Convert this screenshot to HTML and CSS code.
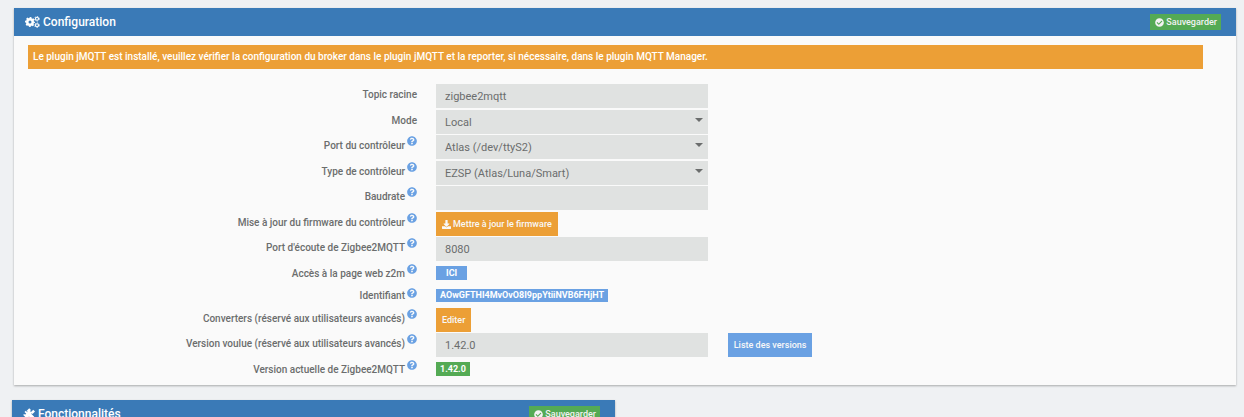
FILE: index.html
```html
<!DOCTYPE html>
<html lang="fr">
<head>
    <meta charset="UTF-8">
    <meta name="viewport" content="width=device-width, initial-scale=1.0">
    <title>Configuration</title>
    <link rel="stylesheet" href="styles.css">
</head>
<body>
    <svg class="sprite" aria-hidden="true">
        <symbol id="icon-help" viewBox="0 0 512 512">
            <path d="M504 256c0 137-111 248-248 248S8 393 8 256 119 8 256 8s248 111 248 248zM262.700 90c-54.500 0-89.300 23-116.500 63.800-3.500 5.300-2.400 12.400 2.700 16.200l34.700 26.300c5.200 3.900 12.600 3 16.700-2.100 17.900-22.700 30.100-35.800 57.300-35.800 20.400 0 45.700 13.100 45.700 33 0 15-12.400 22.700-32.500 34C247.100 238.500 216 254.900 216 296v4c0 6.600 5.400 12 12 12h56c6.600 0 12-5.400 12-12v-1.300c0-28.500 83.200-29.600 83.200-106.700 0-58-60.200-102-116.500-102zM256 338c-25.400 0-46 20.600-46 46s20.600 46 46 46 46-20.600 46-46-20.600-46-46-46z"/>
        </symbol>
        <symbol id="icon-check" viewBox="0 0 512 512">
            <path d="M504 256c0 137-111 248-248 248S8 393 8 256 119 8 256 8s248 111 248 248zM227.300 387.300l184-184c6.200-6.200 6.200-16.400 0-22.600l-22.600-22.600c-6.200-6.200-16.400-6.200-22.600 0L216 308.100l-70.100-70.100c-6.200-6.200-16.400-6.200-22.600 0l-22.600 22.600c-6.200 6.200-6.200 16.400 0 22.600l104 104c6.200 6.200 16.400 6.200 22.600 0z"/>
        </symbol>
        <symbol id="icon-download" viewBox="0 0 512 512">
            <path d="M216 0h80c13.300 0 24 10.700 24 24v168h87.700c17.800 0 26.700 21.500 14.100 34.100L269.700 378.300c-7.500 7.500-19.800 7.500-27.300 0L90.100 226.100c-12.600-12.600-3.700-34.100 14.100-34.100H192V24c0-13.300 10.700-24 24-24zm296 376v112c0 13.300-10.700 24-24 24H24c-13.300 0-24-10.700-24-24V376c0-13.300 10.700-24 24-24h146.700l49 49c20.100 20.100 52.500 20.100 72.600 0l49-49H488c13.300 0 24 10.700 24 24z"/>
        </symbol>
        <symbol id="icon-cogs" viewBox="0 0 30 24">
            <g fill="none" stroke="currentColor">
                <circle cx="10" cy="12" r="5.500" stroke-width="5"/>
                <circle cx="10" cy="12" r="8.500" stroke-width="3" stroke-dasharray="3.700 2.976" stroke-dashoffset="1.800"/>
                <circle cx="24" cy="5.500" r="3" stroke-width="2.400"/>
                <circle cx="24" cy="5.500" r="4.700" stroke-width="1.600" stroke-dasharray="2.600 2.322"/>
                <circle cx="24" cy="18.500" r="3" stroke-width="2.400"/>
                <circle cx="24" cy="18.500" r="4.700" stroke-width="1.600" stroke-dasharray="2.600 2.322"/>
            </g>
        </symbol>
        <symbol id="icon-satellite" viewBox="0 0 24 24">
            <path d="M7 6l5.500-5.500 3.500 3.500-2 2 2 2 4.500-4.500L24 7l-5 5-1.500-1.500-1 1 6 6-5 5-5.500-5.500-1.500 1.500c.8 1.800.5 3.500-.5 5L0 13.500c1.500-1.200 3.500-1.300 5-.5l1.500-1.500L3 8l2.500-2.500 3 3L9.500 7.500z"/>
        </symbol>
    </svg>

    <main class="page">
        <section class="panel">
            <header class="panel-heading">
                <h3 class="panel-title"><svg class="icon-title"><use href="#icon-cogs"/></svg> Configuration</h3>
                <button type="button" class="btn-save"><svg class="icon-btn"><use href="#icon-check"/></svg> Sauvegarder</button>
            </header>
            <div class="alert">Le plugin jMQTT est installé, veuillez vérifier la configuration du broker dans le plugin jMQTT et la reporter, si nécessaire, dans le plugin MQTT Manager.</div>
            <form class="form">
                <div class="form-group">
                    <label for="topic">Topic racine</label>
                    <div class="field"><input type="text" id="topic" class="control" value="zigbee2mqtt"></div>
                </div>
                <div class="form-group">
                    <label for="mode">Mode</label>
                    <div class="field select-wrap">
                        <select id="mode" class="control"><option>Local</option></select>
                    </div>
                </div>
                <div class="form-group">
                    <label for="port">Port du contrôleur <svg class="icon-help"><use href="#icon-help"/></svg></label>
                    <div class="field select-wrap">
                        <select id="port" class="control"><option>Atlas (/dev/ttyS2)</option></select>
                    </div>
                </div>
                <div class="form-group">
                    <label for="type">Type de contrôleur <svg class="icon-help"><use href="#icon-help"/></svg></label>
                    <div class="field select-wrap">
                        <select id="type" class="control"><option>EZSP (Atlas/Luna/Smart)</option></select>
                    </div>
                </div>
                <div class="form-group">
                    <label for="baudrate">Baudrate <svg class="icon-help"><use href="#icon-help"/></svg></label>
                    <div class="field"><input type="text" id="baudrate" class="control"></div>
                </div>
                <div class="form-group">
                    <label for="firmware">Mise à jour du firmware du contrôleur <svg class="icon-help"><use href="#icon-help"/></svg></label>
                    <div class="field"><button type="button" id="firmware" class="btn btn-warning"><svg class="icon-btn"><use href="#icon-download"/></svg> Mettre à jour le firmware</button></div>
                </div>
                <div class="form-group">
                    <label for="listen">Port d'écoute de Zigbee2MQTT <svg class="icon-help"><use href="#icon-help"/></svg></label>
                    <div class="field"><input type="text" id="listen" class="control" value="8080"></div>
                </div>
                <div class="form-group">
                    <label for="web">Accès à la page web z2m <svg class="icon-help"><use href="#icon-help"/></svg></label>
                    <div class="field"><a href="#" id="web" class="badge badge-info badge-link">ICI</a></div>
                </div>
                <div class="form-group form-group-sm">
                    <label for="ident">Identifiant <svg class="icon-help"><use href="#icon-help"/></svg></label>
                    <div class="field"><output id="ident" class="badge badge-info">AOwGFTHI4MvOvO8I9ppYtiiNVB6FHjHT</output></div>
                </div>
                <div class="form-group">
                    <label for="converters">Converters (réservé aux utilisateurs avancés) <svg class="icon-help"><use href="#icon-help"/></svg></label>
                    <div class="field"><button type="button" id="converters" class="btn btn-warning">Editer</button></div>
                </div>
                <div class="form-group">
                    <label for="wanted">Version voulue (réservé aux utilisateurs avancés) <svg class="icon-help"><use href="#icon-help"/></svg></label>
                    <div class="field"><input type="text" id="wanted" class="control" value="1.42.0"></div>
                    <div class="field"><button type="button" class="btn btn-info">Liste des versions</button></div>
                </div>
                <div class="form-group">
                    <label for="current">Version actuelle de Zigbee2MQTT <svg class="icon-help"><use href="#icon-help"/></svg></label>
                    <div class="field"><output id="current" class="badge badge-success">1.42.0</output></div>
                </div>
            </form>
        </section>

        <section class="panel panel-half">
            <header class="panel-heading">
                <h3 class="panel-title"><svg class="icon-title icon-square"><use href="#icon-satellite"/></svg> Fonctionnalités</h3>
                <button type="button" class="btn-save"><svg class="icon-btn"><use href="#icon-check"/></svg> Sauvegarder</button>
            </header>
        </section>
    </main>
</body>
</html>
```
FILE: styles.css
```css
* {
    box-sizing: border-box;
}
body {
    margin: 0;
    height: 100vh;
    overflow: hidden;
    background-color: #eff1f3;
    color: #6b6d6d;
    font-family: Roboto, sans-serif;
    font-size: 10px;
}
button, input, select {
    font-family: inherit;
    border: none;
    border-radius: 0;
    margin: 0;
}
svg {
    fill: currentColor;
}
.sprite {
    display: none;
}
.page {
    padding: 8px 8px 0 14px;
}
.panel {
    background-color: #fafafa;
    box-shadow: 0 1px 2px rgba(0,0,0,0.3);
    margin-bottom: 15px;
}
.panel-half {
    width: 603px;
    max-width: 100%;
    margin-left: -2px;
}
.panel-heading {
    display: flex;
    align-items: center;
    justify-content: space-between;
    height: 28px;
    padding: 0 15px 0 11px;
    background-color: #3a7ab7;
    color: #fff;
}
.panel-title {
    display: flex;
    align-items: center;
    gap: 3px;
    margin: 0;
    font-size: 12px;
    font-weight: 500;
}
.icon-title {
    width: 15px;
    height: 12px;
}
.icon-square {
    width: 12px;
}
.btn-save {
    display: flex;
    align-items: center;
    gap: 2px;
    height: 16px;
    padding: 0 4px 0 5px;
    background-color: #54aa54;
    color: #f2f2f2;
    font-size: 9px;
    font-weight: 500;
}
.icon-btn {
    width: 9px;
    height: 9px;
}
.alert {
    margin: 9px 33px 15px 14px;
    padding: 0 5px;
    line-height: 24px;
    background-color: #ec9f36;
    color: #fff;
    font-weight: 500;
}
.form {
    padding: 0 32px 2px 23px;
}
.form-group {
    display: grid;
    grid-template-columns: 4fr 3fr 5fr;
    height: 24px;
    margin-bottom: 1px;
}
.form-group:nth-child(odd) {
    margin-bottom: 2px;
}
.form-group:last-child {
    margin-bottom: 0;
}
.form-group-sm {
    height: 18px;
}
label {
    display: flex;
    justify-content: flex-end;
    gap: 2px;
    padding-right: 9px;
    line-height: 22px;
    font-weight: 500;
}
.form-group-sm label {
    line-height: 16px;
}
.icon-help {
    width: 10px;
    height: 10px;
    margin-top: 1px;
    color: #6aa1e3;
}
.form-group-sm .icon-help {
    margin-top: 0;
}
.field {
    display: flex;
    align-items: flex-start;
    padding: 0 10px;
}
.control {
    width: 100%;
    height: 24px;
    padding: 0 9px;
    background-color: #e0e2e1;
    color: #6b6d6d;
    font-size: 11px;
    appearance: none;
}
.select-wrap {
    position: relative;
}
.select-wrap::after {
    content: "";
    position: absolute;
    top: 8px;
    right: 15px;
    border: 4px solid transparent;
    border-top-color: #6b6d6d;
    border-bottom: none;
    pointer-events: none;
}
.btn {
    display: flex;
    align-items: center;
    gap: 2px;
    height: 24px;
    padding: 0 6px;
    color: #f8f8f8;
    font-size: 9px;
    font-weight: 500;
}
.btn-warning {
    background-color: #ec9f36;
}
.btn-info, .badge-info {
    background-color: #6aa1e3;
}
.badge {
    margin-top: 3px;
    padding: 0 4px;
    line-height: 14px;
    color: #fff;
    font-size: 9px;
    font-weight: 700;
    text-decoration: none;
}
.form-group-sm .badge {
    margin-top: 1px;
    line-height: 13px;
}
.badge-link {
    padding: 0 10px;
}
.badge-success {
    background-color: #54aa54;
}
```
